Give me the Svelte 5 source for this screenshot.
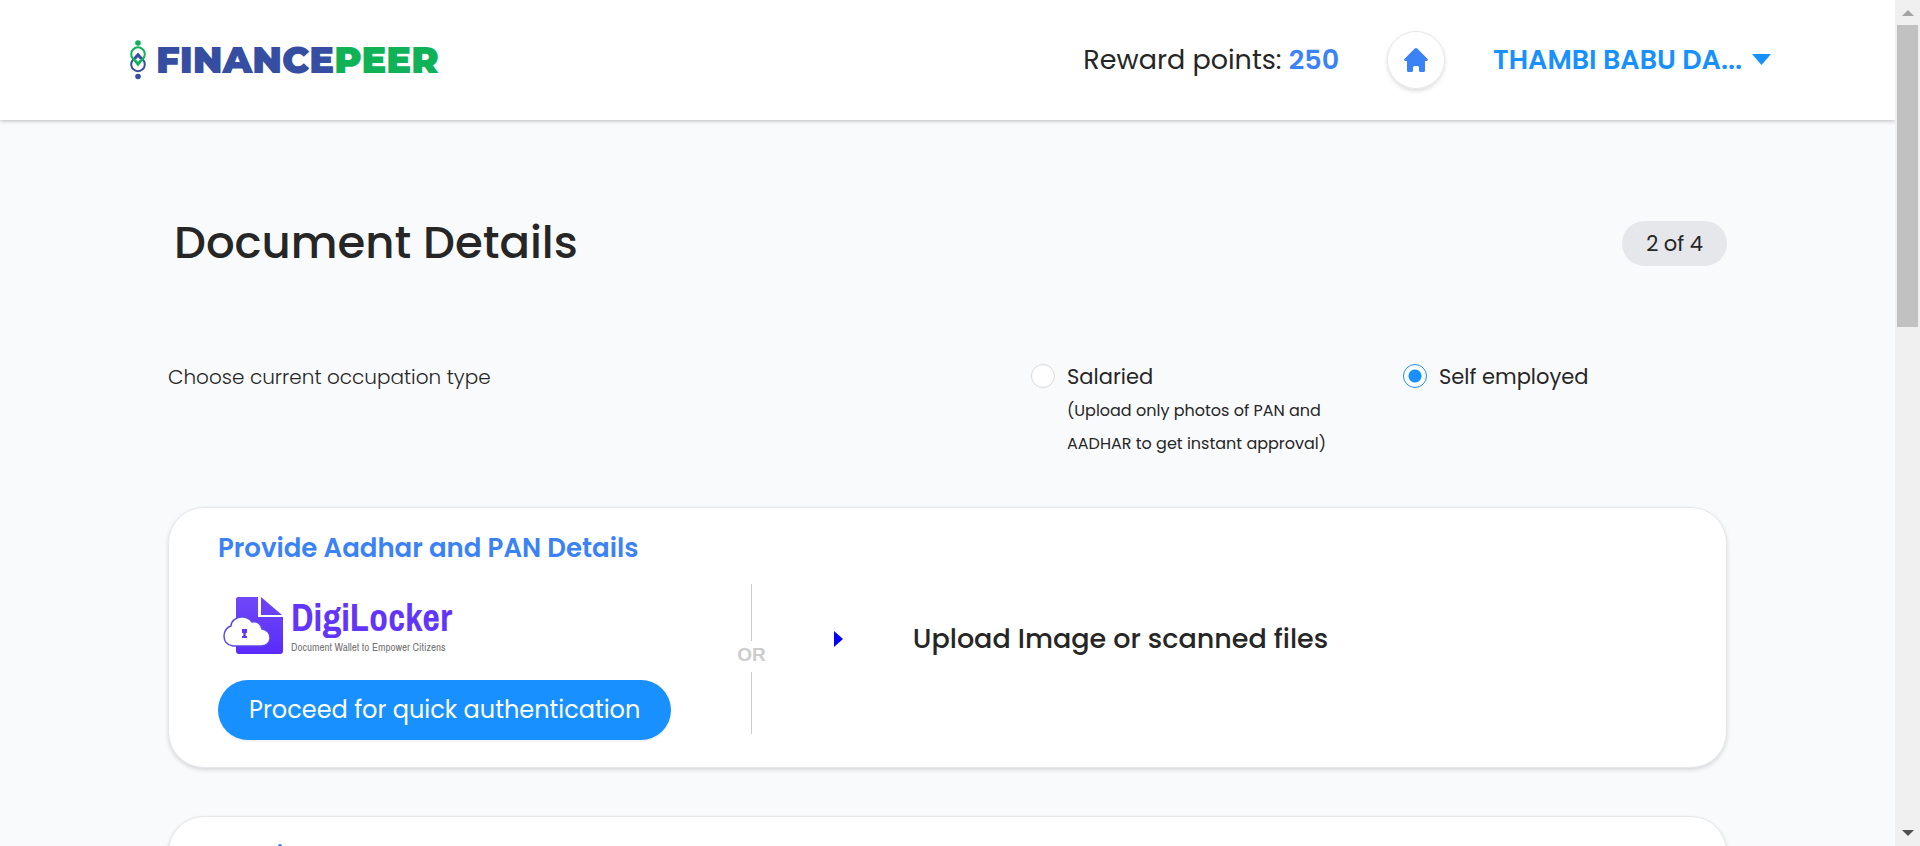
<script>
  let occupation = $state('self');
</script>

<div class="window">
  <div class="page">
    <header class="topbar">
      <a class="brand" href="#home" aria-label="Financepeer">
        <svg width="18" height="42" viewBox="0 0 18 42" fill="none" aria-hidden="true">
          <g stroke="#354ea1" stroke-width="2">
            <path d="M9 15 L14.2 21 A6.8 6.8 0 1 1 3.8 21 Z" />
            <path d="M6 20 L9 16.5 L12 20" />
          </g>
          <g stroke="#0fb256" stroke-width="2">
            <path d="M9 26 L3.8 19.5 A6.8 6.8 0 1 1 14.2 19.5 Z" />
            <path d="M6 21 L9 24.5 L12 21" />
          </g>
          <circle cx="9" cy="4" r="2.8" fill="#0fb256" />
          <circle cx="9" cy="37.5" r="2.8" fill="#354ea1" />
        </svg>
        <span class="wordmark">FINANCE<span class="peer">PEER</span></span>
      </a>
      <nav class="actions">
        <span class="reward">Reward points: <strong>250</strong></span>
        <a class="home" href="#dashboard" aria-label="Home">
          <svg width="24" height="24" viewBox="0 0 24 24" fill="#3b82f6" aria-hidden="true">
            <path d="M12 0 Q12.8 0 13.3 .6 L23.6 11.1 Q24.3 12 23.3 12.8 Q23 13 22 13 H21 V22.5 Q21 24 19.5 24 H16.5 Q15 24 15 22.5 V19.5 Q15 18 13.5 18 H10.5 Q9 18 9 19.5 V22.5 Q9 24 7.5 24 H4.5 Q3 24 3 22.5 V13 H2 Q1 13 .7 12.8 Q-.3 12 .4 11.1 L10.7 .6 Q11.2 0 12 0 Z" />
          </svg>
        </a>
        <button class="account" type="button">
          THAMBI BABU DA...
          <svg width="19" height="12" viewBox="0 0 19 12" fill="#1890ff" aria-hidden="true"><path d="M0 0 H19 L9.5 11 Z" /></svg>
        </button>
      </nav>
    </header>

    <main>
      <div class="heading">
        <h1>Document Details</h1>
        <span class="step">2 of 4</span>
      </div>

      <div class="occupation" role="radiogroup" aria-labelledby="occupation-label">
        <span class="question" id="occupation-label">Choose current occupation type</span>
        <label class="option">
          <input type="radio" name="occupation" value="salaried" bind:group={occupation} />
          <span>
            Salaried
            <small>(Upload only photos of PAN and<br />AADHAR to get instant approval)</small>
          </span>
        </label>
        <label class="option">
          <input type="radio" name="occupation" value="self" bind:group={occupation} />
          <span>Self employed</span>
        </label>
      </div>

      <section class="card">
        <h2>Provide Aadhar and PAN Details</h2>
        <div class="methods">
          <div class="digilocker">
            <div class="digilogo">
              <svg width="62" height="60" viewBox="0 0 62 60" aria-hidden="true">
                <defs>
                  <linearGradient id="violet" x1="0" y1="0" x2="0" y2="1">
                    <stop offset="0" stop-color="#7048f8" />
                    <stop offset="1" stop-color="#5a2bfb" />
                  </linearGradient>
                </defs>
                <path d="M15 1 H35 V21 H60 V55 Q60 58 57 58 H16 Q13 58 13 55 V3 Q13 1 15 1 Z" fill="url(#violet)" />
                <path d="M38 1 L59 19 H38 Z" fill="#6a40f9" />
                <path d="M10 50 C4 49 1 45 1 40 C1 35 4 31 8 30 C8 25 13 21 19 21 C23 21 27 23 29 26 C34 25 38 28 39 33 C44 34 47 37 47 42 C47 47 43 50 38 50 Z" fill="#fff" stroke="#5f48e8" stroke-width="1.5" />
                <path d="M19 33 H24 V37 H22.7 V40 H24 V42 H19 V40 H20.3 V37 H19 Z" fill="#6236fa" />
              </svg>
              <div class="diginame">
                <span class="name">DigiLocker</span>
                <span class="tagline">Document Wallet to Empower Citizens</span>
              </div>
            </div>
            <button class="proceed" type="button">Proceed for quick authentication</button>
          </div>
          <div class="divider"><span>OR</span></div>
          <button class="upload" type="button">
            <svg width="9" height="16" viewBox="0 0 9 16" fill="#0000ff" aria-hidden="true"><path d="M0 0 L9 8 L0 16 Z" /></svg>
            Upload Image or scanned files
          </button>
        </div>
      </section>

      <section class="card next"><i class="mark"></i></section>
    </main>
  </div>

  <div class="scrollbar" aria-hidden="true">
    <svg width="12" height="6" viewBox="0 0 12 6" fill="#a3a3a3"><path d="M6 0 L12 6 H0 Z" /></svg>
    <div class="track"><div class="thumb"></div></div>
    <svg width="12" height="6" viewBox="0 0 12 6" fill="#505050"><path d="M0 0 H12 L6 6 Z" /></svg>
  </div>
</div>

<style>
  :global(body) {
    margin: 0;
    background: #f9fafc;
    color: #262626;
    font-family: Poppins, Inter, sans-serif;
  }
  .window {
    display: flex;
    height: 100vh;
    overflow: hidden;
  }
  .page {
    flex: 1;
    min-width: 0;
    overflow: hidden;
  }
  button {
    border: 0;
    background: none;
    padding: 0;
    font: inherit;
    cursor: pointer;
  }
  a {
    text-decoration: none;
  }
  .topbar {
    display: flex;
    align-items: center;
    justify-content: space-between;
    height: 120px;
    padding: 0 124px 0 129px;
    box-sizing: border-box;
    background: #fff;
    box-shadow: 0 1px 4px rgba(0, 0, 0, 0.25);
  }
  .brand {
    display: flex;
    align-items: center;
    gap: 9px;
  }
  .wordmark {
    color: #354ea1;
    font-family: Montserrat, Inter, sans-serif;
    font-size: 37px;
    font-weight: 900;
    line-height: 40px;
  }
  .peer {
    color: #0fb256;
  }
  .actions {
    display: flex;
    align-items: center;
    gap: 48px;
  }
  .reward {
    font-size: 27px;
  }
  .reward strong {
    color: #3b82f6;
    font-weight: 600;
  }
  .home {
    display: grid;
    place-items: center;
    width: 58px;
    height: 58px;
    border: 1px solid #e5e7eb;
    border-radius: 50%;
    box-sizing: border-box;
    box-shadow: 0 2px 4px rgba(0, 0, 0, 0.14);
  }
  .account {
    display: flex;
    align-items: center;
    gap: 10px;
    color: #1890ff;
    font-size: 27px;
    font-weight: 600;
  }
  main {
    padding: 96px 168px 0;
  }
  .heading {
    display: flex;
    align-items: center;
    justify-content: space-between;
    padding-left: 6px;
  }
  h1 {
    margin: 0;
    font-size: 45px;
    font-weight: 500;
    line-height: 54px;
  }
  .step {
    padding: 0 24px;
    border-radius: 24px;
    background: #e5e7eb;
    font-size: 21px;
    line-height: 45px;
  }
  .occupation {
    display: grid;
    grid-template-columns: 1fr 372px 324px;
    margin-top: 90px;
    font-size: 21px;
    line-height: 33px;
  }
  .question {
    font-size: 20px;
    font-weight: 300;
    line-height: 34px;
  }
  .option {
    display: flex;
    gap: 12px;
    align-items: flex-start;
  }
  .option input {
    appearance: none;
    flex: none;
    width: 24px;
    height: 24px;
    margin: 4px 0 0;
    border: 1px solid #d9d9d9;
    border-radius: 50%;
    background: #fff;
  }
  .option input:checked {
    border-color: #1890ff;
    background: radial-gradient(circle, #1890ff 6px, #fff 7px);
  }
  .option small {
    display: block;
    padding-top: 1px;
    font-size: 16px;
  }
  .card {
    margin-top: 47px;
    padding: 20px 49px 27px;
    border: 1px solid #e5e7eb;
    border-radius: 36px;
    background: #fff;
    box-shadow: 0 2px 4px rgba(0, 0, 0, 0.14);
  }
  h2 {
    margin: 0;
    color: #3b82f6;
    font-size: 26px;
    font-weight: 600;
    line-height: 40px;
  }
  .methods {
    display: flex;
    align-items: flex-start;
    padding-top: 16px;
  }
  .digilocker {
    display: flex;
    flex-direction: column;
    gap: 24px;
    padding-top: 12px;
  }
  .digilogo {
    display: flex;
    gap: 6px;
    padding-left: 5px;
  }
  .diginame {
    display: flex;
    flex-direction: column;
    font-family: "Archivo Narrow", "Roboto Condensed", "Liberation Sans Narrow", "Liberation Sans", sans-serif;
  }
  .name {
    color: #6236fa;
    font-size: 38px;
    font-weight: 700;
    line-height: 44px;
  }
  .tagline {
    color: #777;
    font-size: 11px;
    line-height: 14px;
  }
  .proceed {
    padding: 0 31px;
    border-radius: 30px;
    background: #1890ff;
    color: #fff;
    font-size: 24px;
    line-height: 60px;
    box-shadow: 0 2px 0 rgba(0, 0, 0, 0.04);
  }
  .divider {
    display: grid;
    grid-template-rows: 57px 1fr 62px;
    justify-items: center;
    height: 150px;
    margin-left: 66px;
    color: #ccc;
    font-family: "Liberation Sans", sans-serif;
    font-size: 19px;
    font-weight: 700;
    line-height: 27px;
  }
  .divider::before,
  .divider::after {
    content: "";
    width: 1px;
    height: 100%;
    background: #ccc;
  }
  .upload {
    display: flex;
    align-items: center;
    gap: 70px;
    margin: 35px 0 0 68px;
    color: #262626;
    font-size: 27px;
    font-weight: 500;
    line-height: 40px;
  }
  .next {
    display: flex;
    height: 200px;
    margin-top: 48px;
    padding-top: 27px;
  }
  .mark {
    width: 4px;
    height: 4px;
    margin-left: 60px;
    border-radius: 2px;
    background: #3b82f6;
  }
  .scrollbar {
    display: flex;
    flex-direction: column;
    align-items: center;
    gap: 9px;
    width: 25px;
    padding: 10px 0;
    box-sizing: border-box;
    background: #f0f0f0;
  }
  .track {
    flex: 1;
    width: 21px;
  }
  .thumb {
    height: 38%;
    background: #c1c1c1;
  }
</style>
